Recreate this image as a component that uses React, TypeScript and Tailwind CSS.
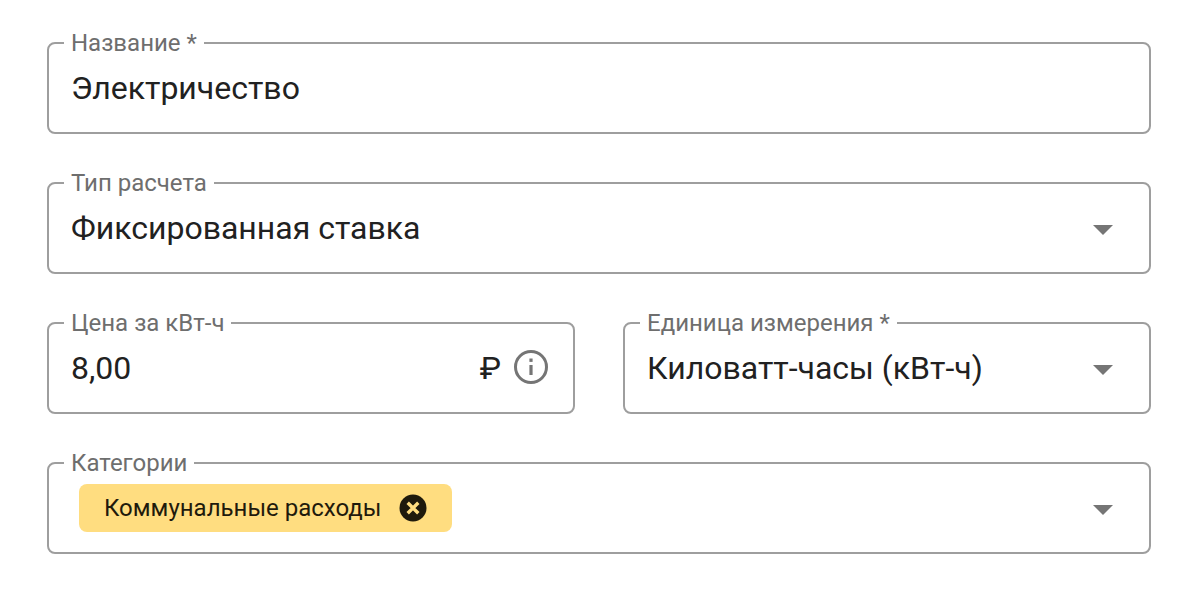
const Arrow = () => (
  <svg width="20" height="10" viewBox="0 0 20 10" className="mt-[3px] shrink-0">
    <path d="M0 0 L20 0 L10 10 Z" fill="#757575" />
  </svg>
);

const Field = ({ label, inset = "pl-[7px]", className = "", children }: { label: string; inset?: string; className?: string; children: React.ReactNode }) => (
  <fieldset className={`h-[103px] min-w-0 rounded-lg border-2 border-[#9e9e9e] pl-[15px] ${className}`}>
    <legend className="h-[24px] pl-[7px] pr-[7px] text-[24px] leading-[24px] text-[#6e6e6e]">{label}</legend>
    <div className={`flex h-[66px] items-center justify-between pr-[36px] ${inset}`}>{children}</div>
  </fieldset>
);

export default function App() {
  return (
    <div className="flex h-[602px] w-[1198px] flex-col gap-[37px] bg-white px-[47px] pt-[31px] font-['Roboto',sans-serif] text-[32px] text-[#212121]">
      <Field label="Название *">
        <span>Электричество</span>
      </Field>
      <Field label="Тип расчета">
        <span>Фиксированная ставка</span>
        <Arrow />
      </Field>
      <div className="grid grid-cols-2 gap-[48px]">
        <Field label="Цена за кВт-ч" inset="pl-[7px] !pr-[24px]">
          <span>8,00</span>
          <div className="flex items-center gap-[12px]">
            <span>₽</span>
            <svg width="36" height="36" viewBox="0 0 36 36" fill="none" stroke="#757575" className="mb-[2px]">
              <circle cx="18" cy="18" r="15.5" strokeWidth="3" />
              <path d="M18 16v10" strokeWidth="3.2" />
              <path d="M18 9.5v3.4" strokeWidth="3.2" />
            </svg>
          </div>
        </Field>
        <Field label="Единица измерения *">
          <span>Киловатт-часы (кВт-ч)</span>
          <Arrow />
        </Field>
      </div>
      <Field label="Категории" inset="pl-[15px]">
        <div className="flex h-[48px] items-center gap-[18px] rounded-lg bg-[#ffdd80] pl-[25px] pr-[25px] text-[24px] text-[#1f1a0c]">
          <span>Коммунальные расходы</span>
          <svg width="28" height="28" viewBox="0 0 28 28">
            <circle cx="14" cy="14" r="13.5" fill="#1f1a0c" />
            <path d="M8.7 8.7l10.6 10.6M19.3 8.7l-10.6 10.6" stroke="#ffdd80" strokeWidth="3.4" />
          </svg>
        </div>
        <Arrow />
      </Field>
    </div>
  );
}
